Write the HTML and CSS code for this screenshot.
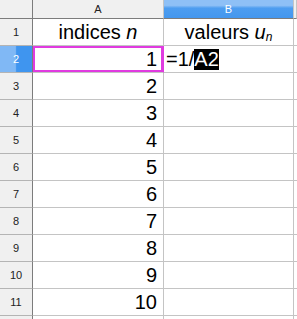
FILE: index.html
```html
<!DOCTYPE html>
<html>
  <head>
    <title>suite</title>
    <meta charset="utf-8" />
    <link rel="stylesheet" href="styles.css">
  </head>
  <body>
    <div class="sheet">
      <div class="corner"></div>
      <div class="colhead">A</div>
      <div class="colhead sel">B</div>
      <div class="colhead last"></div>

      <div class="rowhead">1</div>
      <div class="cell center">indices <i>n</i></div>
      <div class="cell center">valeurs <i>u</i><sub>n</sub></div>
      <div class="cell last"></div>

      <div class="rowhead sel">2</div>
      <div class="cell num active">1</div>
      <div class="cell edit">=1/<span class="ref">A2</span></div>
      <div class="cell last"></div>

      <div class="rowhead">3</div>
      <div class="cell num">2</div>
      <div class="cell"></div>
      <div class="cell last"></div>

      <div class="rowhead">4</div>
      <div class="cell num">3</div>
      <div class="cell"></div>
      <div class="cell last"></div>

      <div class="rowhead">5</div>
      <div class="cell num">4</div>
      <div class="cell"></div>
      <div class="cell last"></div>

      <div class="rowhead">6</div>
      <div class="cell num">5</div>
      <div class="cell"></div>
      <div class="cell last"></div>

      <div class="rowhead">7</div>
      <div class="cell num">6</div>
      <div class="cell"></div>
      <div class="cell last"></div>

      <div class="rowhead">8</div>
      <div class="cell num">7</div>
      <div class="cell"></div>
      <div class="cell last"></div>

      <div class="rowhead">9</div>
      <div class="cell num">8</div>
      <div class="cell"></div>
      <div class="cell last"></div>

      <div class="rowhead">10</div>
      <div class="cell num">9</div>
      <div class="cell"></div>
      <div class="cell last"></div>

      <div class="rowhead">11</div>
      <div class="cell num">10</div>
      <div class="cell"></div>
      <div class="cell last"></div>

      <div class="rowhead"></div>
      <div class="cell"></div>
      <div class="cell"></div>
      <div class="cell last"></div>
    </div>
  </body>
</html>
```

FILE: styles.css
```css
*{
	margin:0px;
	padding:0px;
	box-sizing:border-box;
}
body{
	background:#fff;
	font-family:"Liberation Sans",Arial,sans-serif;
	overflow:hidden;
}
.sheet{
	display:grid;
	grid-template-columns:33px 131px 130px 1fr;
	grid-template-rows:19px;
	grid-auto-rows:27px;
	width:297px;
}
.corner{
	background:#f0f0f0;
	border-right:1px solid #7c7c7c;
	border-bottom:1px solid #7c7c7c;
}
.colhead{
	background:#f0f0f0;
	border-right:1px solid #c4c4c4;
	border-bottom:1px solid #7c7c7c;
	font-size:11px;
	line-height:18px;
	text-align:center;
	color:#222;
}
.colhead.sel{
	background:linear-gradient(#8ec0f6 0%,#8ec0f6 30%,#4d9df0 45%,#4497ee 100%);
	color:#fff;
}
.rowhead{
	background:#f0f0f0;
	border-right:1px solid #7c7c7c;
	border-bottom:1px solid #b4b4b4;
	font-size:11px;
	line-height:26px;
	text-align:center;
	color:#222;
}
.rowhead.sel{
	background:linear-gradient(to right,#80b8f5 0%,#80b8f5 48%,#3f95ef 52%,#3f95ef 100%);
	color:#fff;
}
.cell{
	border-right:1px solid #c4c4c4;
	border-bottom:1px solid #c4c4c4;
	font-size:20px;
	line-height:26px;
	color:#000;
	white-space:nowrap;
	overflow:hidden;
}
.cell.last{
	border-right:none;
}
.center{
	text-align:center;
}
.center sub{
	font-size:12px;
	font-style:italic;
	vertical-align:-2px;
}
.num{
	text-align:right;
	padding-right:6px;
}
.active{
	box-shadow:inset 0 0 0 2px #e03be0;
	border-right-color:#e03be0;
}
.edit{
	padding-left:2px;
}
.ref{
	background:#000;
	color:#fff;
	display:inline-block;
	line-height:21px;
}
```
